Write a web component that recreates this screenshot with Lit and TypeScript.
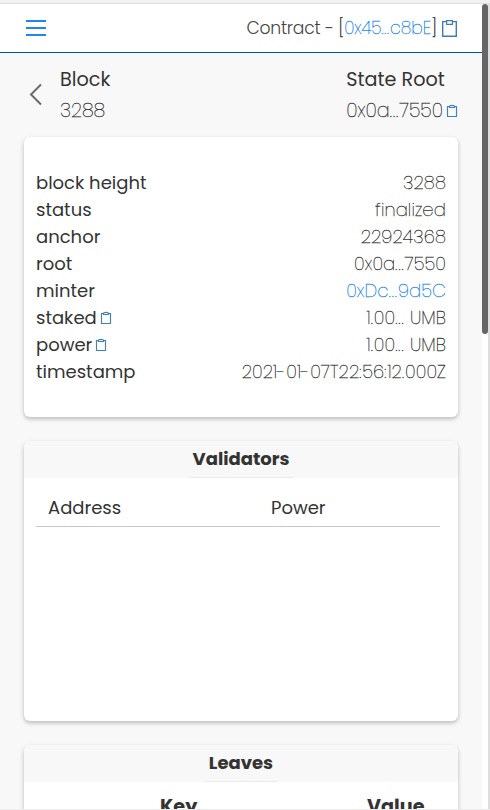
import { LitElement, html, css } from "lit";
import { customElement } from "lit/decorators.js";

const smallClip = html`<svg class="clip-sm" width="12" height="14" viewBox="0 0 12 14">
  <path d="M3.5 2.5H1.5V12.5H10.5V2.5H8.5M3.5 2.5C3.5 .9 8.5 .9 8.5 2.5V3.5H3.5Z" fill="none" stroke="#4380bb" stroke-width="1.15" />
</svg>`;

const largeClip = html`<svg class="clip-lg" width="15" height="17" viewBox="0 0 15 17">
  <path d="M4.5 1.6H.7V16.3H14.3V1.6H10.5" fill="none" stroke="#3d7dbb" stroke-width="1.4" />
  <path d="M4.6 .6H10.4V4.3H4.6Z" fill="none" stroke="#3d7dbb" stroke-width="1.2" />
</svg>`;

interface Row { name: string; value: string; copy?: boolean; link?: boolean; }

const rows: Row[] = [
  { name: "block height", value: "3288" },
  { name: "status", value: "finalized" },
  { name: "anchor", value: "22924368" },
  { name: "root", value: "0x0a...7550" },
  { name: "minter", value: "0xDc...9d5C", link: true },
  { name: "staked", value: "1.00... UMB", copy: true },
  { name: "power", value: "1.00... UMB", copy: true },
  { name: "timestamp", value: "2021-01-07T22:56:12.000Z" },
];

/** Thin text with its punctuation tracked a little wider than its digits. */
const thin = (text: string, extra = "") =>
  html`<span class="light ${extra}">${text
    .split(/([.:-]+)/)
    .map((part) => (/^[.:-]/.test(part) ? html`<span class="punct">${part}</span>` : part))}</span>`;

@customElement("app-root")
class AppRoot extends LitElement {
  static styles = css`
    :host {
      display: block; width: 490px; height: 810px; overflow: hidden; box-sizing: border-box;
      background: #f8f8f8; color: #333;
      font-family: Poppins, Inter, sans-serif;
      font-size: 18px; line-height: 27px;
      border-top: 3px solid #f1f1f1; border-bottom: 1px solid #ececec;
    }
    * { box-sizing: border-box; }
    svg { display: block; flex: none; }
    .window { display: flex; height: 806px; border-top: 1px solid #dfdfdf; }
    .page { width: 482px; height: 805px; overflow: hidden; }
    .scroll { width: 8px; background: #fff; border-right: 2px solid #dedede; }
    .thumb { height: 330px; background: #666; border-radius: 3px; }
    .bar {
      height: 49px; display: flex; align-items: center; justify-content: space-between;
      background: #fff; border-bottom: 1px solid #0052a5; padding: 0 25px 0 26px;
    }
    .menu { display: flex; flex-direction: column; gap: 5px; width: 20px; }
    .menu i { height: 2px; background: #1c87f2; }
    .contract {
      display: flex; align-items: center; color: #444; font-size: 17.2px; font-weight: 300;
      letter-spacing: -.22px; white-space: pre;
    }
    .contract .clip-lg { margin-left: 5px; }
    .light { font-weight: 200; letter-spacing: .12px; white-space: pre; -webkit-text-stroke: .3px currentColor; }
    .contract .light { letter-spacing: 0; }
    .punct { letter-spacing: 1px; }
    .contract .punct { letter-spacing: .8px; }
    .link { color: #1c87f2; }
    .heading { display: flex; height: 84px; padding: 11px 24px 0 29px; }
    .back { margin: 19px 18px 0 0; }
    .col { display: flex; flex-direction: column; }
    .root { margin-left: auto; }
    .title, .sub { display: flex; align-items: center; height: 31px; font-size: 19.2px; }
    .sub .light { letter-spacing: 0; }
    .sub .clip-sm { margin: 1px 0 0 3px; }
    .card {
      margin: 0 24px 24px; height: 280px; background: #fff; border-radius: 6px; overflow: hidden;
      width: 434px; box-shadow: 0 2px 4px rgba(0, 0, 0, .25);
    }
    .details { padding: 32px 12px; }
    .row { display: flex; align-items: center; height: 27px; }
    .row .clip-sm { margin: 1px 0 0 3px; }
    .value { margin-left: auto; }
    .head { display: flex; justify-content: center; height: 37px; background: #f8f8f8; }
    .tab { padding: 4px 5px 0; height: 37px; border-bottom: 1px solid #ebebeb; font-weight: 700; }
    .cells { display: grid; grid-template-columns: 223px 1fr; margin: 12px 18px 0 12px; height: 37px; padding: 4px 0 0 12px; border-bottom: 1px solid #c8c8c8; }
    .keys { display: grid; grid-template-columns: 207px 1fr; padding: 11px 0 0 136px; font-size: 19.2px; font-weight: 700; }
  `;

  render() {
    return html`
      <div class="window">
        <div class="page">
          <div class="bar">
            <div class="menu"><i></i><i></i><i></i></div>
            <div class="contract"><span>Contract - [${thin("0x45...c8bE", "link")}]</span>${largeClip}</div>
          </div>
          <div class="heading">
            <svg class="back" width="13" height="23" viewBox="0 0 13 23">
              <path d="M12 1.5L2 11.5L12 21.5" fill="none" stroke="#6b6b6b" stroke-width="2" />
            </svg>
            <div class="col">
              <div class="title">Block</div>
              <div class="sub">${thin("3288")}</div>
            </div>
            <div class="col root">
              <div class="title">State Root</div>
              <div class="sub">${thin("0x0a...7550")}${smallClip}</div>
            </div>
          </div>
          <div class="card details">
            ${rows.map((r) => html`<div class="row">
              <span>${r.name}</span>${r.copy ? smallClip : ""}
              ${thin(r.value, r.link ? "value link" : "value")}
            </div>`)}
          </div>
          <div class="card">
            <div class="head"><div class="tab">Validators</div></div>
            <div class="cells"><span>Address</span><span>Power</span></div>
          </div>
          <div class="card">
            <div class="head"><div class="tab">Leaves</div></div>
            <div class="keys"><span>Key</span><span>Value</span></div>
          </div>
        </div>
        <div class="scroll"><div class="thumb"></div></div>
      </div>
    `;
  }
}
